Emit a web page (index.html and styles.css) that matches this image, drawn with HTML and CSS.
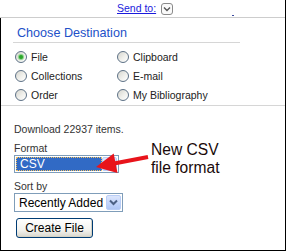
FILE: index.html
```html
<!DOCTYPE html>
<html>
<head>
<meta charset="utf-8">
<link rel="stylesheet" href="styles.css">
</head>
<body>
<div class="page">
  <div class="topbar">
    <a class="sendto" href="#">Send to:</a>
    <span class="sendicon"><svg width="10" height="10" viewBox="0 0 10 10"><path d="M2 3.5 L5 6.5 L8 3.5" fill="none" stroke="#555" stroke-width="1.4"/></svg></span>
    <span class="dot"></span>
  </div>
  <div class="main">
    <div class="dest">
      <div class="dest-title">Choose Destination</div>
      <div class="radios">
        <label class="radio"><span class="rb checked"></span>File</label>
        <label class="radio"><span class="rb"></span>Clipboard</label>
        <label class="radio"><span class="rb"></span>Collections</label>
        <label class="radio"><span class="rb"></span>E-mail</label>
        <label class="radio"><span class="rb"></span>Order</label>
        <label class="radio"><span class="rb"></span>My Bibliography</label>
      </div>
    </div>
    <div class="download">
      <div class="txt dl">Download 22937 items.</div>
      <div class="txt fmt">Format</div>
      <div class="select csv"><span class="sel-val"><span class="focus">CSV</span></span><span class="sel-btn"><svg width="9" height="7" viewBox="0 0 9 7"><path d="M1 1.5 L4.5 5 L8 1.5" fill="none" stroke="#4d6185" stroke-width="2"/></svg></span></div>
      <div class="txt sort">Sort by</div>
      <div class="select recent"><span class="sel-val">Recently Added</span><span class="sel-btn"><svg width="9" height="7" viewBox="0 0 9 7"><path d="M1 1.5 L4.5 5 L8 1.5" fill="none" stroke="#4d6185" stroke-width="2"/></svg></span></div>
      <button class="btn">Create File</button>
    </div>
    <svg class="arrow" width="62" height="30" viewBox="0 0 62 30">
      <line x1="24" y1="15.5" x2="58" y2="9" stroke="#e8141b" stroke-width="4"/>
      <polygon points="6,19 23.7,5.4 27.5,25" fill="#e8141b"/>
    </svg>
    <div class="callout">New CSV<br>file format</div>
  </div>
</div>
</body>
</html>
```

FILE: styles.css
```css
* { box-sizing: border-box; }
html, body { margin: 0; padding: 0; background: #fff; }
body {
  font-family: "Liberation Sans", Arial, sans-serif;
  width: 287px;
  height: 252px;
  overflow: hidden;
}
.page {
  width: 286px;
  height: 251px;
  border-right: 1px solid #000;
}
.topbar {
  height: 18px;
  border-bottom: 1px solid #cdcdcd;
  display: flex;
  align-items: flex-start;
  padding-left: 117px;
}
.sendto {
  font-size: 10.5px;
  line-height: 13px;
  margin-top: 2px;
  color: #1a1adc;
  text-decoration: underline;
}
.sendicon {
  width: 12px;
  height: 12px;
  margin-top: 3px;
  margin-left: 5px;
  border: 1px solid #8a8a8a;
  border-radius: 3px;
  display: flex;
  align-items: center;
  justify-content: center;
  background: #fafafa;
}
.dot {
  width: 2px;
  height: 1px;
  background: #3a4aa0;
  margin-top: 15px;
  margin-left: 59px;
}
.main {
  position: relative;
  height: 233px;
  border-left: 1px solid #000;
  border-bottom: 1px solid #000;
}
.dest-title {
  margin-left: 12px;
  width: 227px;
  padding: 7px 0 1px 4px;
  line-height: 16px;
  font-size: 12.6px;
  color: #2250c8;
  border-bottom: 1px solid #d6d6d6;
}
.radios {
  display: grid;
  grid-template-columns: 102px auto;
  grid-auto-rows: 19px;
  padding-left: 14px;
  margin-top: 4px;
  padding-bottom: 1px;
  border-bottom: 1px solid #d6d6d6;
  font-size: 10.5px;
  color: #222;
}
.radio {
  display: flex;
  align-items: center;
  gap: 4px;
}
.rb {
  width: 12px;
  height: 12px;
  border-radius: 50%;
  border: 1px solid #5d7186;
  background: linear-gradient(135deg, #d6d6cf 0%, #f0f0ec 55%, #ffffff 100%);
  display: flex;
  align-items: center;
  justify-content: center;
}
.rb.checked::after {
  content: "";
  width: 4px;
  height: 4px;
  border-radius: 50%;
  background: #2aa52a;
  box-shadow: 0 0 1px 1px #7fcf7f;
}
.download {
  padding-left: 13px;
  padding-top: 17px;
}
.txt {
  font-size: 10.5px;
  line-height: 13px;
  color: #333;
}
.fmt { margin-top: 6px; }
.sort { margin-top: 7px; }
.select {
  display: flex;
  align-items: stretch;
  height: 19px;
  border: 1px solid #7f9db9;
  background: #fff;
  padding: 1px;
  font-size: 12px;
}
.csv { width: 105px; height: 18px; }
.recent { width: 109px; }
.sel-val {
  flex: 1;
  display: flex;
  align-items: center;
  color: #000;
  padding-left: 3px;
}
.csv .sel-val {
  background: #316ac5;
  padding: 0;
}
.focus {
  flex: 1;
  align-self: stretch;
  display: flex;
  align-items: center;
  padding-left: 3px;
  color: #fff;
  border: 1px dotted #f0c060;
}
.sel-btn {
  width: 15px;
  display: flex;
  align-items: center;
  justify-content: center;
  border: 1px solid #b9cdf6;
  border-radius: 2px;
  background: linear-gradient(180deg, #dce6fc 0%, #c1d3fb 60%, #b0c6f5 100%);
}
.btn {
  margin-top: 6px;
  margin-left: 2px;
  width: 77px;
  height: 20px;
  padding: 0;
  font-family: "Liberation Sans", Arial, sans-serif;
  font-size: 12px;
  color: #000;
  border: 1px solid #003c74;
  border-radius: 3px;
  background: linear-gradient(180deg, #ffffff 0%, #f3f3ef 60%, #d8d6cc 100%);
  box-shadow: inset -1px -1px 0 #d5d2c4;
}
.arrow {
  position: absolute;
  left: 89px;
  top: 130px;
}
.callout {
  position: absolute;
  left: 150px;
  top: 123px;
  font-size: 15.6px;
  line-height: 18px;
  color: #1a0a0a;
}
```
